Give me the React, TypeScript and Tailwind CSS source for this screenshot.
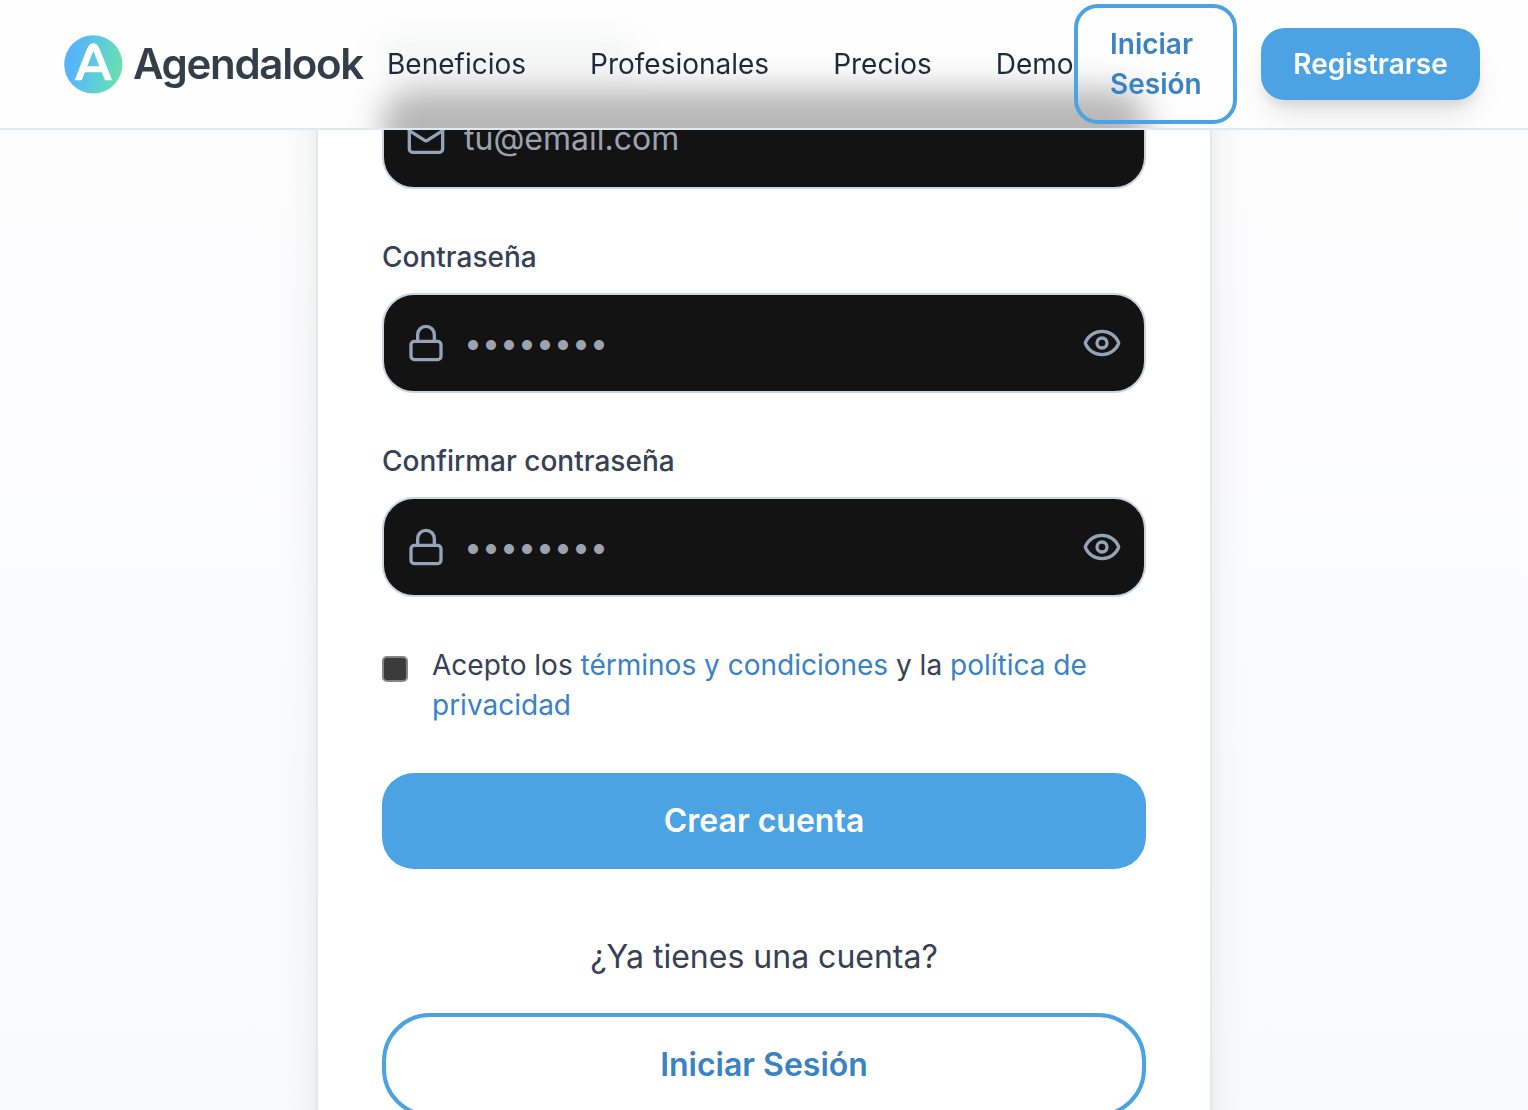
import { useState } from "react";
import type { ReactNode } from "react";
import { Eye, EyeOff, Lock, Mail } from "lucide-react";

function Logo() {
  return (
    <a href="#" className="flex shrink-0 items-center gap-[10px]">
      <svg width="59" height="59" viewBox="0 0 59 59" fill="none" aria-hidden="true">
        <defs>
          <linearGradient id="logo-fill" x1="4" y1="22" x2="56" y2="34" gradientUnits="userSpaceOnUse">
            <stop offset="0.1" stopColor="#55b5f8" />
            <stop offset="0.5" stopColor="#5ccade" />
            <stop offset="1" stopColor="#67dfb0" />
          </linearGradient>
          <clipPath id="logo-feet">
            <rect width="59" height="45.2" />
          </clipPath>
        </defs>
        <circle cx="29.3" cy="29.3" r="29.1" fill="url(#logo-fill)" />
        <g stroke="white" clipPath="url(#logo-feet)">
          <path d="M13.1 48 26.1 15Q29.3 8 32.5 15L45.7 48" strokeWidth="6.6" />
          <path d="M19 34.3H40" strokeWidth="6" />
        </g>
      </svg>
      <span className="w-[231px] text-[42px] leading-none font-semibold tracking-[-1.32px] text-[#333e4b]">
        Agendalook
      </span>
    </a>
  );
}

const navLinks = ["Beneficios", "Profesionales", "Precios", "Demo"];

/* Frosted impression of the form scrolled beneath the header. */
function FrostedBackdrop() {
  return (
    <div aria-hidden="true" className="absolute inset-0 -z-10 overflow-hidden bg-[#fefefe]">
      <div className="mx-auto h-full w-[764px] pt-[45px] blur-[16px]">
        <div className="h-4 w-[252px] bg-slate-700/10" />
        <div className="mt-7 h-[100px] rounded-[32px] bg-[#131313]/30" />
      </div>
    </div>
  );
}

function Header() {
  return (
    <header className="fixed inset-x-0 top-0 z-10 flex h-[130px] items-center border-b-2 border-[#e2e8f0] pr-12 pl-16">
      <FrostedBackdrop />
      <Logo />
      <nav className="ml-[23px] flex shrink-0 gap-16 text-[28px] leading-10 text-[#1f293b]">
        {navLinks.map((link) => (
          <a key={link} href="#">
            {link}
          </a>
        ))}
      </nav>
      <div className="ml-auto flex shrink-0 items-center gap-6 text-[28px] leading-10 font-semibold">
        <a
          href="#"
          className="w-[163px] rounded-3xl border-4 border-[#4ba3e3] px-8 py-4 text-[#3982c4]"
        >
          Iniciar Sesión
        </a>
        <a
          href="#"
          className="w-[219px] rounded-3xl bg-[#4ba3e3] py-4 text-center text-white shadow-[0_20px_30px_-6px_rgba(0,0,0,0.1),0_8px_12px_-4px_rgba(0,0,0,0.1)]"
        >
          Registrarse
        </a>
      </div>
    </header>
  );
}

function Field({
  label,
  icon,
  type,
  placeholder,
}: {
  label: string;
  icon: ReactNode;
  type: "email" | "password";
  placeholder: string;
}) {
  const [visible, setVisible] = useState(false);
  const secret = type === "password";
  return (
    <label className="flex flex-col gap-4">
      <span className="text-[28px] leading-10 font-medium text-[#364155]">{label}</span>
      <span className="flex h-[100px] items-center rounded-[32px] border-2 border-[#cbd5e1] bg-[#131313] px-[22px] text-[#94a3b8]">
        {icon}
        <input
          type={secret && visible ? "text" : type}
          placeholder={placeholder}
          className="ml-[18px] min-w-0 flex-1 bg-transparent text-[32px] leading-[48px] text-white outline-none placeholder:text-[#9ca3af]"
        />
        {secret && (
          <button type="button" aria-label="Mostrar contraseña" onClick={() => setVisible(!visible)}>
            {visible ? <EyeOff size={40} /> : <Eye size={40} />}
          </button>
        )}
      </span>
    </label>
  );
}

export default function App() {
  return (
    <div className="h-screen overflow-hidden bg-linear-to-b from-[#fdfdfe] to-[#f9fafc] font-['Inter',sans-serif]">
      <Header />
      <main className="mx-auto h-[1300px] w-[896px] border-2 border-[#e2e8f0] bg-white px-16 pt-[31px] shadow-[0_40px_50px_-10px_rgba(0,0,0,0.1),0_16px_20px_-12px_rgba(0,0,0,0.1)]">
        <form className="flex flex-col gap-12">
          <Field label="Correo electrónico" type="email" placeholder="tu@email.com" icon={<Mail size={40} />} />
          <Field label="Contraseña" type="password" placeholder="••••••••" icon={<Lock size={40} />} />
          <Field label="Confirmar contraseña" type="password" placeholder="••••••••" icon={<Lock size={40} />} />
          <label className="flex items-start gap-6 text-[28px] leading-10 text-[#364155]">
            <input
              type="checkbox"
              className="mt-[11px] size-[26px] shrink-0 appearance-none rounded-[5px] border-2 border-[#858585] bg-[#3b3b3b] checked:bg-[#4ba3e3]"
            />
            <span>
              Acepto los{" "}
              <a href="#" className="text-[#3982c4]">
                términos y condiciones
              </a>{" "}
              y la{" "}
              <a href="#" className="text-[#3982c4]">
                política de privacidad
              </a>
            </span>
          </label>
          <button type="button" className="h-24 rounded-[32px] bg-[#4ba3e3] text-[32px] leading-[48px] font-semibold text-white">
            Crear cuenta
          </button>
        </form>
        <div className="mt-16 flex flex-col gap-8 text-center text-[32px] leading-[48px]">
          <p className="text-[#364155]">¿Ya tienes una cuenta?</p>
          <a
            href="#"
            className="rounded-[48px] border-4 border-[#4ba3e3] py-6 font-semibold text-[#3982c4]"
          >
            Iniciar Sesión
          </a>
        </div>
      </main>
    </div>
  );
}
